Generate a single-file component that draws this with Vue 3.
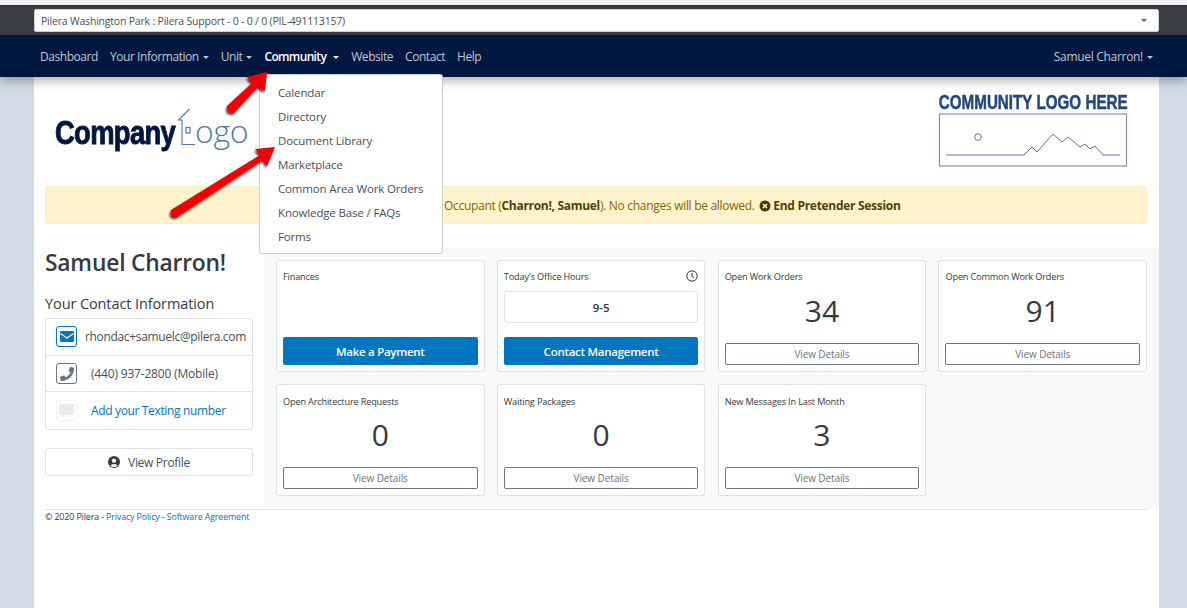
<script setup>
const navLeft = [
  { label: 'Dashboard' },
  { label: 'Your Information', caret: true },
  { label: 'Unit', caret: true },
  { label: 'Community', caret: true, active: true },
  { label: 'Website' },
  { label: 'Contact' },
  { label: 'Help' }
]
const menu = ['Calendar', 'Directory', 'Document Library', 'Marketplace', 'Common Area Work Orders', 'Knowledge Base / FAQs', 'Forms']
const row1 = [
  { title: 'Open Work Orders', value: '34' },
  { title: 'Open Common Work Orders', value: '91' }
]
const row2 = [
  { title: 'Open Architecture Requests', value: '0' },
  { title: 'Waiting Packages', value: '0' },
  { title: 'New Messages In Last Month', value: '3' }
]
</script>

<template>
  <div class="page">
    <div class="strip"></div>
    <div class="topbar">
      <div class="select">
        <span>Pilera Washington Park : Pilera Support - 0 - 0 / 0 (PIL-491113157)</span>
        <i class="caret grey"></i>
      </div>
    </div>
    <nav class="nav">
      <div class="nav-left">
        <a v-for="n in navLeft" :key="n.label" class="nav-link" :class="{ active: n.active }">
          {{ n.label }}<i v-if="n.caret" class="caret"></i>
        </a>
      </div>
      <a class="nav-link user">Samuel Charron!<i class="caret"></i></a>
    </nav>

    <main class="sheet">
      <header class="brand">
        <div class="company">
          <span class="c-bold">Company</span>
          <svg class="house" width="18" height="46" viewBox="0 0 18 46">
            <path d="M12.500 1 L1.500 12 H5 V36.500 H18" fill="none" stroke="#4f7ba3" stroke-width="1.100" />
            <rect x="9" y="19.500" width="4" height="5.500" fill="none" stroke="#4f7ba3" stroke-width="1.200" />
          </svg>
          <span class="c-light">ogo</span>
        </div>
        <div class="community">
          <div class="cl-title">COMMUNITY LOGO HERE</div>
          <svg width="189" height="54" viewBox="0 0 189 54">
            <rect x="1.500" y="1" width="187" height="52" fill="none" stroke="#7c90b8" stroke-width="1.200" />
            <circle cx="40" cy="24" r="3.300" fill="none" stroke="#5a75a5" stroke-width="1" />
            <path d="M8 42 H86 L94 34 L99 39 L115 21 L124 29 L130 24 L142 34 L147 31 L152 36 L157 33 L165 42 H182" fill="none" stroke="#5a75a5" stroke-width="1" />
          </svg>
        </div>
      </header>

      <div class="alert">
        <span class="alert-text">Occupant (<b>Charron!, Samuel</b>). No changes will be allowed.
          <svg class="x" width="12" height="12" viewBox="0 0 12 12"><circle cx="6" cy="6" r="5.500" fill="#4d3a05"/><path d="M4 4l4 4M8 4l-4 4" stroke="#fff3cd" stroke-width="1.600"/></svg>
          <b>End Pretender Session</b></span>
      </div>

      <div class="content">
        <aside class="side">
          <h1>Samuel Charron!</h1>
          <h2>Your Contact Information</h2>
          <ul class="contact">
            <li>
              <span class="ico blue">
                <svg width="14" height="11" viewBox="0 0 14 11"><rect width="14" height="11" rx="1.200" fill="#0275bf"/><path d="M0.500 2.500 L7 7 L13.500 2.500" fill="none" stroke="#fff" stroke-width="1.100"/></svg>
              </span>
              <span class="c-text tight">rhondac+samuelc@pilera.com</span>
            </li>
            <li>
              <span class="ico grey-b">
                <svg width="14" height="14" viewBox="0 0 512 512"><path fill="#6c757d" d="M493 24L389 0c-11-3-23 3-27 14l-48 112c-4 10-1 21 7 28l61 50c-36 76-98 139-175 175l-50-61c-7-8-18-11-28-7L17 359c-11 5-17 17-14 28l24 104c3 11 12 19 23 19 256 0 464-207 464-464 0-11-8-20-21-22z"/></svg>
              </span>
              <span class="c-text wide phone">(440) 937-2800 (Mobile)</span>
            </li>
            <li>
              <span class="ico light">
                <svg width="15" height="14" viewBox="0 0 15 14"><path fill="#e9ecef" d="M1.500 0h12A1.500 1.500 0 0 1 15 1.500v8A1.500 1.500 0 0 1 13.500 11H7l-3.500 3v-3h-2A1.500 1.500 0 0 1 0 9.500v-8A1.500 1.500 0 0 1 1.500 0z"/></svg>
              </span>
              <a class="c-text wide link">Add your Texting number</a>
            </li>
          </ul>
          <button class="profile">
            <svg width="12" height="12" viewBox="0 0 12 12"><circle cx="6" cy="6" r="6" fill="#343a40"/><circle cx="6" cy="4.700" r="2.100" fill="#fff"/><path d="M2.300 9.600a4.200 3 0 0 1 7.400 0A5 5 0 0 1 2.300 9.600z" fill="#fff"/></svg>
            View Profile
          </button>
        </aside>

        <section class="grid">
          <div class="card">
            <div class="card-title">Finances</div>
            <div class="fill"></div>
            <button class="primary">Make a Payment</button>
          </div>
          <div class="card">
            <div class="card-title">Today's Office Hours
              <svg class="clock" width="12" height="12" viewBox="0 0 12 12"><circle cx="6" cy="6" r="5.200" fill="none" stroke="#343a40" stroke-width="1"/><path d="M6 2.800V6.300L8.200 7.800" fill="none" stroke="#343a40" stroke-width="1"/></svg>
            </div>
            <div class="hours">9-5</div>
            <div class="fill"></div>
            <button class="primary">Contact Management</button>
          </div>
          <div v-for="c in row1" :key="c.title" class="card">
            <div class="card-title">{{ c.title }}</div>
            <div class="value">{{ c.value }}</div>
            <button class="outline">View Details</button>
          </div>
          <div v-for="c in row2" :key="c.title" class="card">
            <div class="card-title">{{ c.title }}</div>
            <div class="value">{{ c.value }}</div>
            <button class="outline">View Details</button>
          </div>
        </section>
      </div>

      <footer class="foot">
        © 2020 Pilera - <a>Privacy Policy</a> - <a>Software Agreement</a>
      </footer>
    </main>

    <div class="menu">
      <div v-for="m in menu" :key="m" class="menu-item">{{ m }}</div>
    </div>

    <svg class="arrows" width="300" height="160" viewBox="0 0 300 160">
      <defs>
        <filter id="sh" x="-20%" y="-20%" width="140%" height="140%">
          <feDropShadow dx="-1" dy="2" stdDeviation="1.200" flood-color="#000" flood-opacity="0.750"/>
        </filter>
      </defs>
      <g filter="url(#sh)" fill="#f00000">
        <path d="M67 36 L92 13 L87 7 L107 2 L105 21 L98 17 L74 43 Q66 44 67 36 Z"/>
        <path d="M11 140 L100 85 L95 79 L115 77 L107 96 L103 90 L17 147 Q9 148 11 140 Z"/>
      </g>
    </svg>
  </div>
</template>

<style>
html, body { margin: 0; padding: 0; background: #d0dbe5; }
</style>

<style scoped>
.page { position: relative; height: 608px; overflow: hidden; font-family: "Open Sans", "Noto Sans", sans-serif; color: #343a40; background: #d0dbe5; }
.strip { height: 5px; background: #f1f1f1; }
.topbar { height: 30px; background: #3a3d42; padding: 3px 28px 3px 34px; box-sizing: border-box; border-top: 1px solid #2f3236; position: relative; z-index: 2; }
.select { height: 23px; background: #fff; border-radius: 2px; border: 1px solid #ced4da; box-sizing: border-box; display: flex; align-items: center; justify-content: space-between; padding: 0 11px 0 6px; font-size: 10.500px; letter-spacing: -0.200px; color: #495057; }
.nav { height: 42px; background: #001740; display: flex; align-items: center; justify-content: space-between; padding: 0 28px 0 34px; box-shadow: 0 4px 10px rgba(0,0,0,.3); position: relative; z-index: 2; }
.nav-left { display: flex; }
.nav-link { padding: 0 6px; font-size: 12px; letter-spacing: -0.440px; color: #c3c8d2; white-space: nowrap; }
.nav-link.user { letter-spacing: -0.300px; }
.nav-link.active { color: #fff; font-weight: 600; letter-spacing: -0.650px; }
.nav-link.active .caret { margin-left: 7px; }
.caret { display: inline-block; margin-left: 4px; vertical-align: 2px; border-top: 3.500px solid currentColor; border-left: 3.500px solid transparent; border-right: 3.500px solid transparent; }
.caret.grey { color: #5a6268; margin: 0; }
.sheet { margin: 0 28px 0 34px; background: #fff; height: 531px; padding: 0 12px 0 11px; box-sizing: border-box; }
.brand { height: 109px; display: flex; justify-content: space-between; padding: 16px 20px 0 10px; box-sizing: border-box; }
.company { display: flex; align-items: flex-start; height: 70px; color: #001740; }
.c-bold { font: 700 33px/1 "Liberation Sans", sans-serif; letter-spacing: -0.800px; margin-top: 23px; transform: scaleX(.83); transform-origin: left; width: 122px; -webkit-text-stroke: .9px #001740; white-space: nowrap; }
.house { margin-top: 15px; margin-left: 0; }
.c-light { font: 300 32px/1 "Open Sans", sans-serif; color: #4f7ba3; margin-top: 22px; letter-spacing: -0.300px; font-weight: 300; }
.community { width: 189px; margin-top: 0; }
.cl-title { font: 700 20px/19px "Liberation Sans", sans-serif; color: #24477f; white-space: nowrap; transform: scaleX(.76); transform-origin: left; -webkit-text-stroke: .5px #24477f; margin-bottom: 1px; padding-left: 1px; }
.community svg { display: block; }
.alert { height: 38px; background: #fff3cd; border: 1px solid #ffeeba; border-radius: 3px; box-sizing: border-box; display: flex; align-items: center; padding-left: 398px; font-size: 12px; letter-spacing: -0.300px; color: #856404; white-space: nowrap; }
.alert b { color: #533f03; font-weight: 700; }
.x { vertical-align: -2px; margin: 0 2px 0 2px; }
.content { display: flex; margin-top: 24px; height: 261px; margin-right: -12px; }
.side { width: 208px; flex: none; }
.side h1 { margin: 0; font-size: 22.800px; font-weight: 600; line-height: 30px; letter-spacing: -0.200px; color: #343a40; white-space: nowrap; }
.side h2 { margin: 16px 0 0; font-size: 14.500px; font-weight: 500; line-height: 20px; letter-spacing: -0.100px; color: #343a40; white-space: nowrap; }
.contact { list-style: none; margin: 4px 0 0; padding: 0; border: 1px solid #dee2e6; border-radius: 3px; }
.contact li { height: 36.700px; display: flex; align-items: center; padding-left: 10px; font-size: 12px; border-bottom: 1px solid #dee2e6; box-sizing: border-box; }
.contact li:last-child { border-bottom: 0; }
.ico { width: 21px; height: 21px; border: 1.500px solid; border-radius: 3px; box-sizing: border-box; display: flex; align-items: center; justify-content: center; flex: none; }
.ico.blue { border-color: #0275bf; }
.ico.grey-b { border-color: #6c757d; }
.ico.light { border-color: #f1f3f5; }
.c-text { white-space: nowrap; color: #495057; letter-spacing: -0.350px; }
.c-text.tight { margin-left: 8px; letter-spacing: -0.330px; }
.c-text.wide { margin-left: 14px; }
.c-text.phone { letter-spacing: -0.180px; }
.c-text.link { color: #0275bf; }
.profile { display: flex; align-items: center; justify-content: center; gap: 8px; width: 208px; height: 28px; margin-top: 18px; padding: 0; background: #fff; border: 1px solid #dee2e6; border-radius: 3px; font: 12px "Open Sans", sans-serif; letter-spacing: -0.300px; color: #495057; }
.grid { flex: 1; background: #f8f9fa; margin-left: 11px; padding: 12px 12px 12px; display: grid; grid-template-columns: repeat(4, 1fr); grid-auto-rows: 112px; column-gap: 12.300px; row-gap: 12px; box-sizing: border-box; }
.card { background: #fff; border: 1px solid #dee2e6; border-radius: 3px; padding: 10px 6px 6px; display: flex; flex-direction: column; box-sizing: border-box; position: relative; }
.card:nth-child(n+5) { padding-top: 11px; }
.card-title { font-size: 9.200px; line-height: 11px; letter-spacing: -0.180px; color: #343a40; white-space: nowrap; }
.clock { position: absolute; right: 6px; top: 9px; }
.fill { flex: 1; }
.primary { height: 28px; flex: none; background: #0275bf; color: #fff; border: 0; border-radius: 2px; padding: 0; font: 600 11.500px "Open Sans", sans-serif; letter-spacing: -0.270px; }
.outline { height: 22px; flex: none; background: #fff; color: #6c757d; border: 1px solid #6c757d; border-radius: 2px; padding: 0; font: 10px "Open Sans", sans-serif; letter-spacing: -0.100px; }
.hours { height: 32px; margin-top: 9px; border: 1px solid #dee2e6; border-radius: 3px; box-sizing: border-box; display: flex; align-items: center; justify-content: center; font-size: 11.500px; font-weight: 600; color: #343a40; }
.value { flex: 1; display: flex; align-items: center; justify-content: center; font-size: 30px; font-weight: 500; line-height: 1; color: #343a40; padding-bottom: 3px; }
.card:nth-child(n+5) .value { padding-bottom: 5px; }
.foot { border-top: 1px solid #dee2e6; font-size: 8.900px; line-height: 12px; padding-top: 1px; color: #343a40; letter-spacing: -0.130px; }
.foot a { color: #0275bf; }
.menu { position: absolute; left: 259px; top: 74px; width: 184px; height: 180px; background: #fff; border: 1px solid #ccc; border-radius: 3px; box-sizing: border-box; padding: 6px 0; z-index: 3; }
.menu-item { height: 24px; line-height: 24px; padding-left: 18px; font-size: 11.500px; letter-spacing: -0.150px; color: #495057; white-space: nowrap; }
.arrows { position: absolute; left: 160px; top: 70px; z-index: 4; }
</style>
